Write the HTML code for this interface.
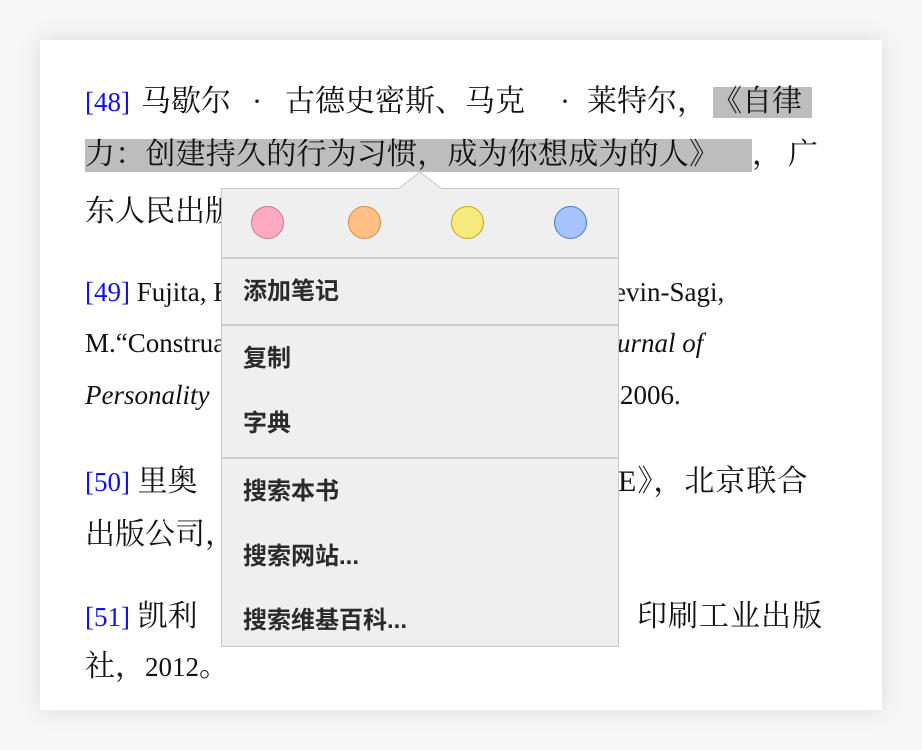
<!DOCTYPE html>
<html><head><meta charset="utf-8"><style>
html,body{margin:0;padding:0;width:922px;height:750px;background:#f7f7f7;overflow:hidden}
.card{position:absolute;left:40px;top:40px;width:842px;height:670px;background:#fff;box-shadow:0 0 22px rgba(0,0,0,0.12)}
.t{position:absolute;white-space:nowrap;font-family:"Liberation Serif","Noto Serif CJK SC",serif;font-size:30px;line-height:34px;color:#111}
.l{font-size:27px}
.b{color:#1010ee}
.i{font-style:italic}
.hl{position:absolute;background:#bdbdbd}
.menu{position:absolute;left:221px;top:188px;width:396px;height:457px;background:#efefef;border:1px solid #c8c8c8;z-index:5;font-family:"Liberation Sans","Noto Sans CJK SC",sans-serif}
.menu .it{position:absolute;left:21px;font-size:24px;font-weight:bold;color:#2a2a2a;line-height:30px}
.menu .hr{position:absolute;left:0;width:396px;height:2px;background:#cdcdcd}
.c{position:absolute;top:17px;width:33px;height:33px;border-radius:50%;box-sizing:border-box;border:1.5px solid}
</style></head><body>
<div class="card"></div>
<div class="hl" style="left:713px;top:87px;width:99px;height:31px"></div>
<div class="hl" style="left:85px;top:139px;width:667px;height:33px"></div>
<div class="t l" style="left:85px;top:85px"><span class="b">[48]</span></div>
<div class="t" style="left:141px;top:85px">马歇尔</div>
<div class="t" style="left:252px;top:85px">·</div>
<div class="t" style="left:285px;top:85px">古德史密斯、马克</div>
<div class="t" style="left:560px;top:85px">·</div>
<div class="t" style="left:587px;top:85px">莱特尔，</div>
<div class="t" style="left:712px;top:85px">《自律</div>
<div class="t" style="left:85px;top:138px;letter-spacing:0.2px">力：创建持久的行为习惯，成为你想成为的人》</div>
<div class="t" style="left:752px;top:138px;letter-spacing:6px">，广</div>
<div class="t" style="left:85px;top:195px">东人民出版社</div>
<div class="t l" style="left:85px;top:275px"><span class="b">[49]</span> Fujita, K.</div>
<div class="t l" style="left:614px;top:275px">evin-Sagi,</div>
<div class="t l" style="left:85px;top:326px">M.“Construal</div>
<div class="t l i" style="left:617px;top:326px">urnal of</div>
<div class="t l i" style="left:85px;top:378px">Personality</div>
<div class="t l" style="left:620px;top:378px">2006.</div>
<div class="t" style="left:85px;top:465px"><span class="b l">[50]</span> 里奥</div>
<div class="t" style="left:618px;top:465px;letter-spacing:1px">E》，北京联合</div>
<div class="t" style="left:85px;top:518px">出版公司，</div>
<div class="t" style="left:85px;top:600px"><span class="b l">[51]</span> 凯利</div>
<div class="t" style="left:637px;top:600px;letter-spacing:1px">印刷工业出版</div>
<div class="t" style="left:85px;top:650px">社，<span class="l">2012</span>。</div>
<svg style="position:absolute;left:398px;top:170px;z-index:6" width="44" height="20"><path d="M0 19 L22 2 L44 19" fill="#efefef" stroke="#c8c8c8" stroke-width="1"/><rect x="0" y="19" width="44" height="2" fill="#efefef"/></svg>
<div class="menu">
<div class="c" style="left:29px;background:#ffaac3;border-color:#c4798e"></div>
<div class="c" style="left:126px;background:#ffbf85;border-color:#d98c3e"></div>
<div class="c" style="left:229px;background:#f7ea7d;border-color:#c9a800"></div>
<div class="c" style="left:332px;background:#a5c3ff;border-color:#4c78cf"></div>
<div class="hr" style="top:68px"></div>
<div class="it" style="top:88px">添加笔记</div>
<div class="hr" style="top:135px"></div>
<div class="it" style="top:155px">复制</div>
<div class="it" style="top:220px">字典</div>
<div class="hr" style="top:268px"></div>
<div class="it" style="top:288px">搜索本书</div>
<div class="it" style="top:353px">搜索网站...</div>
<div class="it" style="top:417px">搜索维基百科...</div>
</div>
</body></html>
